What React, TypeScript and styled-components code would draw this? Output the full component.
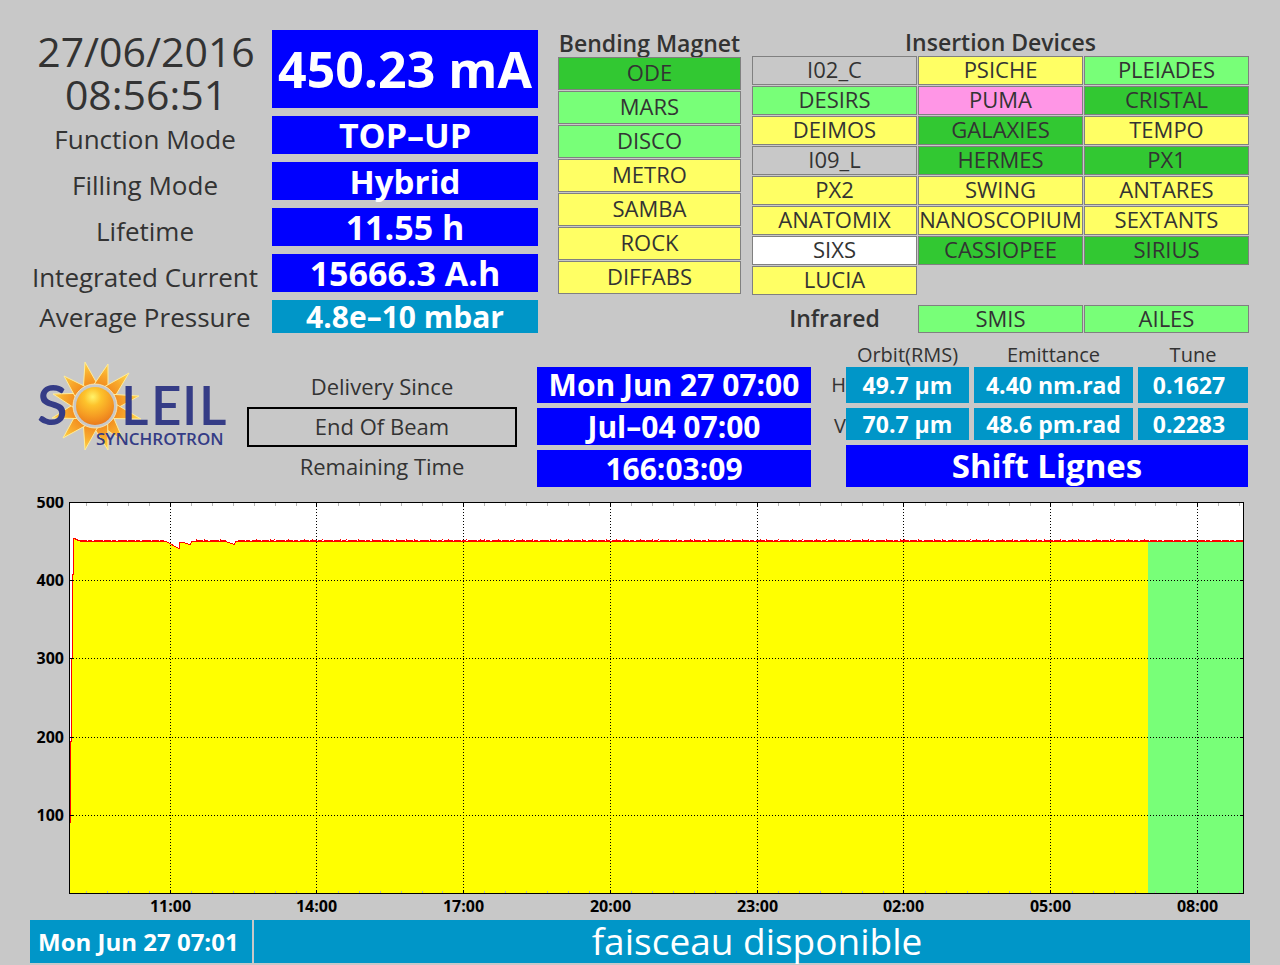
import React from 'react';
import styled, { createGlobalStyle } from 'styled-components';

const GlobalStyle = createGlobalStyle`
  * { box-sizing: border-box; }
  body {
    margin: 0;
    background: #c8c8c8;
    color: #333;
    font-family: "Open Sans", "Noto Sans", sans-serif;
  }
`;

const colors = {
  blue: '#0000ff',
  teal: '#0096c8',
  open: '#32c832',
  ready: '#78ff78',
  closed: '#ffff64',
  fault: '#ff96e6',
  idle: '#ffffff',
  off: '#c8c8c8',
};

type State = 'open' | 'ready' | 'closed' | 'fault' | 'idle' | 'off';
type Beamline = [string, State];

const bendingMagnets: Beamline[] = [
  ['ODE', 'open'],
  ['MARS', 'ready'],
  ['DISCO', 'ready'],
  ['METRO', 'closed'],
  ['SAMBA', 'closed'],
  ['ROCK', 'closed'],
  ['DIFFABS', 'closed'],
];

const insertionDevices: Beamline[] = [
  ['I02_C', 'off'], ['PSICHE', 'closed'], ['PLEIADES', 'ready'],
  ['DESIRS', 'ready'], ['PUMA', 'fault'], ['CRISTAL', 'open'],
  ['DEIMOS', 'closed'], ['GALAXIES', 'open'], ['TEMPO', 'closed'],
  ['I09_L', 'off'], ['HERMES', 'open'], ['PX1', 'open'],
  ['PX2', 'closed'], ['SWING', 'closed'], ['ANTARES', 'closed'],
  ['ANATOMIX', 'closed'], ['NANOSCOPIUM', 'closed'], ['SEXTANTS', 'closed'],
  ['SIXS', 'idle'], ['CASSIOPEE', 'open'], ['SIRIUS', 'open'],
  ['LUCIA', 'closed'],
];

const Page = styled.main`
  padding: 30px 30px 2px;
  white-space: nowrap;
`;

const TopRow = styled.section`
  display: grid;
  grid-template-columns: minmax(0, 508fr) minmax(0, 692fr);
  column-gap: 20px;
`;

const Readouts = styled.dl`
  margin: 0;
  display: grid;
  grid-template-columns: minmax(0, 242fr) minmax(0, 266fr);
  grid-template-rows: 78px repeat(4, 38px) 33px;
  row-gap: 8px;
`;

const Clock = styled.dt`
  display: flex;
  flex-direction: column;
  align-items: center;
  padding-right: 10px;
  font-size: 41px;
  line-height: 43px;
`;

const ReadoutLabel = styled.dt<{ $level?: boolean }>`
  display: flex;
  align-items: center;
  justify-content: center;
  padding: ${p => (p.$level ? 0 : 8)}px 12px 0 0;
  font-size: 26px;
  line-height: 32px;
`;

const Readout = styled.dd<{ $tone: 'blue' | 'teal'; $size: number }>`
  margin: 0;
  display: flex;
  align-items: center;
  justify-content: center;
  background: ${p => colors[p.$tone]};
  color: #fff;
  font-size: ${p => p.$size}px;
  line-height: 1;
  font-weight: 700;
`;

const Beamlines = styled.div`
  display: grid;
  grid-template-columns: minmax(0, 183fr) minmax(0, 497fr);
  column-gap: 11px;
  padding-right: 1px;
  align-items: start;
`;

const GroupTitle = styled.h2<{ $height: number }>`
  margin: 0;
  display: flex;
  align-items: center;
  justify-content: center;
  height: ${p => p.$height}px;
  padding-bottom: 2px;
  font-size: 23px;
  font-weight: 600;
  line-height: 24px;
`;

const CellList = styled.ul<{ $columns: number; $row: number }>`
  margin: 0;
  padding: 0;
  list-style: none;
  display: grid;
  grid-template-columns: repeat(${p => p.$columns}, minmax(0, 1fr));
  grid-auto-rows: ${p => p.$row}px;
  gap: 1px;
`;

const Cell = styled.li<{ $state: State }>`
  display: flex;
  align-items: center;
  justify-content: center;
  padding-bottom: 3px;
  border: 1px solid #808080;
  background: ${p => colors[p.$state]};
  font-size: 22px;
  line-height: 24px;
`;

const Infrared = styled.div`
  display: grid;
  grid-template-columns: minmax(0, 165fr) minmax(0, 331fr);
  column-gap: 1px;
  margin-top: 10px;
`;

const MiddleRow = styled.section`
  display: grid;
  grid-template-columns: minmax(0, 217fr) minmax(0, 564fr) minmax(0, 439fr);
  align-items: end;
  margin-top: 12px;
`;

const LogoArt = styled.svg`
  display: block;
  align-self: start;
  width: 210px;
  height: 98px;
  margin-top: 13px;
`;

const Schedule = styled.div`
  display: grid;
  grid-template-columns: minmax(0, 270fr) minmax(0, 274fr);
  column-gap: 20px;
`;

const ScheduleLabels = styled.div`
  display: grid;
  grid-template-rows: repeat(3, 40px);
`;

const ScheduleLabel = styled.div<{ $boxed?: boolean }>`
  display: flex;
  align-items: center;
  justify-content: center;
  padding-bottom: 2px;
  border: 2px solid ${p => (p.$boxed ? '#000' : 'transparent')};
  font-size: 22px;
  line-height: 28px;
`;

const ScheduleValues = styled.div`
  display: grid;
  grid-template-rows: 36px 37px 37px;
  row-gap: 5px;
`;

const Banner = styled.div<{ $size: number }>`
  display: flex;
  align-items: center;
  justify-content: center;
  background: ${colors.blue};
  color: #fff;
  font-size: ${p => p.$size}px;
  font-weight: 700;
  line-height: 36px;
`;

const Optics = styled.div`
  padding: 0 2px 0 16px;
`;

const OpticsTable = styled.table`
  display: grid;
  grid-template-columns: 14px minmax(0, 123fr) minmax(0, 159fr) minmax(0, 110fr);
  grid-template-rows: 17px 36px 32px;
  gap: 5px;

  thead, tbody, tr { display: contents; }
`;

const ColumnHead = styled.th`
  padding: 0;
  font-size: 20px;
  font-weight: 400;
  line-height: 20px;
  text-align: center;
`;

const RowHead = styled.th`
  padding: 0;
  margin-right: -5px;
  font-size: 20px;
  font-weight: 400;
  line-height: 36px;
  text-align: right;
`;

const OpticsCell = styled.td`
  display: flex;
  align-items: center;
  justify-content: center;
  padding: 0;
  background: ${colors.teal};
  color: #fff;
  font-size: 23px;
  font-weight: 700;
  line-height: 30px;

  &:last-child { padding-right: 8px; }
`;

const ShiftBanner = styled(Banner)`
  height: 42px;
  margin: 5px 0 0 19px;
`;

const ChartArt = styled.svg`
  display: block;
  width: 100%;
  margin-top: 10px;
  font-size: 16px;
  font-weight: 700;
`;

const Footer = styled.footer`
  display: grid;
  grid-template-columns: minmax(0, 222fr) minmax(0, 996fr);
  column-gap: 2px;
  min-height: 43px;
  color: #fff;
`;

const MessageTime = styled.time`
  display: flex;
  align-items: center;
  padding-left: 8px;
  background: ${colors.teal};
  font-size: 24px;
  font-weight: 700;
`;

const Message = styled.div`
  display: flex;
  align-items: center;
  justify-content: center;
  padding: 0 0 2px 10px;
  background: ${colors.teal};
  font-size: 37px;
  line-height: 40px;
`;

const sunX = 65;
const sunY = 48;
const rayTips = [
  [55, 4], [78, 6], [99, 15], [109, 38], [111, 61], [94, 84],
  [78, 92], [55, 92], [33, 80], [22, 60], [23, 36], [34, 18],
];

function ray([x, y]: number[]) {
  const a = Math.atan2(y - sunY, x - sunX);
  const at = (d: number) =>
    `${(sunX + 22 * Math.cos(a + d)).toFixed(1)},${(sunY + 22 * Math.sin(a + d)).toFixed(1)}`;
  return `M${at(-0.33)}L${x},${y}L${at(0.33)}Z`;
}

function Logo() {
  return (
    <LogoArt viewBox="0 0 210 98" role="img" aria-label="SOLEIL Synchrotron">
      <defs>
        <radialGradient id="rays" gradientUnits="userSpaceOnUse" cx={sunX} cy={sunY} r="46">
          <stop offset="0.45" stopColor="#f28c1e" />
          <stop offset="0.7" stopColor="#f8a92c" />
          <stop offset="1" stopColor="#ffd84a" />
        </radialGradient>
        <radialGradient id="disc" cx="0.44" cy="0.26" r="0.75">
          <stop offset="0" stopColor="#fff36a" />
          <stop offset="0.3" stopColor="#fdc32c" />
          <stop offset="0.7" stopColor="#f59a22" />
          <stop offset="1" stopColor="#ea7a1c" />
        </radialGradient>
      </defs>
      {rayTips.map(tip => (
        <path key={tip.join()} d={ray(tip)} fill="url(#rays)" stroke="#ffec9a" strokeWidth="1" />
      ))}
      <circle cx={sunX} cy={sunY} r="22" fill="#c8c8c8" stroke="#f6e2b0" strokeWidth="1" />
      <circle cx={sunX} cy={sunY} r="19" fill="url(#disc)" />
      <g fill="#353c86" fontFamily="Lato, sans-serif" fontWeight="600">
        <text y="67" x="7" fontSize="56">S</text>
        <text y="67" x="91 121 152 169" fontSize="53">LEIL</text>
      </g>
      <text x="66" y="87" fontSize="17" fontWeight="600" fill="#353c86">SYNCHROTRON</text>
    </LogoArt>
  );
}

/* Plot area in the chart's own units. */
const left = 39.5;
const right = 1213.5;
const top = 5.5;
const bottom = 396.5;
const deliveryX = 1118;

const hours: [string, number][] = [
  ['11:00', 140.5], ['14:00', 286.5], ['17:00', 433.5], ['20:00', 580.5],
  ['23:00', 727.5], ['02:00', 873.5], ['05:00', 1020.5], ['08:00', 1167.5],
];
const currents: [string, number][] = [
  ['500', 5.5], ['400', 83.5], ['300', 161.5], ['200', 240.5], ['100', 318.5],
];
const minorTicks = Array.from({ length: 56 }, (_, i) => Math.round(56 + i * 20.97) + 0.5)
  .filter(x => x < right && !hours.some(([, h]) => Math.abs(h - x) < 3));

const rampUp = 'M40.5 326V244H41.5V161H42.5V77H43.5V41H45.5V42H47.5V43H50.5';
const beam = `${rampUp}V44.5H136L149 51.5V45.5H153L160 47.5L162 44.5H196L204 47.5L206 44.5H1213`;
const spikes = Array.from({ length: 150 }, (_, i) => 166 + i * 7 + ((i * i * 13) % 6))
  .filter((x, i) => (i * 7) % 5 < 3 && x < 1120 && (x < 194 || x > 208));

function CurrentChart() {
  return (
    <ChartArt viewBox="0 0 1220 423" role="img" aria-label="Stored current over 24 hours, mA">
      <rect x={left} y={top} width={right - left} height={bottom - top} fill="#fff" />
      <g shapeRendering="crispEdges">
        <path d={`${beam}V396H40Z`} fill="#ffff00" />
        <rect x={deliveryX} y="44" width={right - deliveryX} height="352" fill="#78ff78" />
        <g stroke="#000" strokeDasharray="1 2">
          {hours.map(([t, x]) => <line key={t} x1={x} x2={x} y1={top} y2={bottom} />)}
          {currents.slice(1).map(([t, y]) => <line key={t} x1={left} x2={right} y1={y} y2={y} />)}
        </g>
        <path d={beam} fill="none" stroke="#ff0000" />
        <path d="M50 43.5H136M166 43.5H196M208 43.5H1213" stroke="#ff0000" strokeDasharray="7 1 4 2 9 1" />
        <path d={spikes.map(x => `M${x} 42.5h1`).join('')} stroke="#ff0000" />
        <g stroke="#b4b4b4">
          {minorTicks.map(x => (
            <path key={x} d={`M${x} ${top}v3M${x} ${bottom}v-3`} />
          ))}
        </g>
        <g stroke="#000">
          {hours.map(([t, x]) => <path key={t} d={`M${x} ${top}v4M${x} ${bottom}v-4`} />)}
          {currents.map(([t, y]) => <path key={t} d={`M${left} ${y}h4M${right} ${y}h-4`} />)}
        </g>
        <rect x={left} y={top} width={right - left} height={bottom - top} fill="none" stroke="#000" />
      </g>
      {hours.map(([t, x]) => <text key={t} x={x} y="415" textAnchor="middle">{t}</text>)}
      {currents.map(([t, y]) => <text key={t} x="34" y={y + 5} textAnchor="end">{t}</text>)}
    </ChartArt>
  );
}

function CellGroup({ items, columns, row }: { items: Beamline[]; columns: number; row: number }) {
  return (
    <CellList $columns={columns} $row={row}>
      {items.map(([name, state]) => <Cell key={name} $state={state}>{name}</Cell>)}
    </CellList>
  );
}

export default function App() {
  return (
    <>
      <GlobalStyle />
      <Page>
        <TopRow>
          <Readouts>
            <Clock><span>27/06/2016</span><span>08:56:51</span></Clock>
            <Readout $tone="blue" $size={50}>450.23 mA</Readout>
            <ReadoutLabel>Function Mode</ReadoutLabel>
            <Readout $tone="blue" $size={34}>TOP–UP</Readout>
            <ReadoutLabel>Filling Mode</ReadoutLabel>
            <Readout $tone="blue" $size={33}>Hybrid</Readout>
            <ReadoutLabel>Lifetime</ReadoutLabel>
            <Readout $tone="blue" $size={34}>11.55 h</Readout>
            <ReadoutLabel>Integrated Current</ReadoutLabel>
            <Readout $tone="blue" $size={34}>15666.3 A.h</Readout>
            <ReadoutLabel $level>Average Pressure</ReadoutLabel>
            <Readout $tone="teal" $size={30}>4.8e–10 mbar</Readout>
          </Readouts>
          <Beamlines>
            <div>
              <GroupTitle $height={27}>Bending Magnet</GroupTitle>
              <CellGroup items={bendingMagnets} columns={1} row={33} />
            </div>
            <div>
              <GroupTitle $height={26}>Insertion Devices</GroupTitle>
              <CellGroup items={insertionDevices} columns={3} row={29} />
              <Infrared>
                <GroupTitle $height={28}>Infrared</GroupTitle>
                <CellGroup items={[['SMIS', 'ready'], ['AILES', 'ready']]} columns={2} row={28} />
              </Infrared>
            </div>
          </Beamlines>
        </TopRow>

        <MiddleRow>
          <Logo />
          <Schedule>
            <ScheduleLabels>
              <ScheduleLabel>Delivery Since</ScheduleLabel>
              <ScheduleLabel $boxed>End Of Beam</ScheduleLabel>
              <ScheduleLabel>Remaining Time</ScheduleLabel>
            </ScheduleLabels>
            <ScheduleValues>
              <Banner $size={30}>Mon Jun 27 07:00</Banner>
              <Banner $size={30}>Jul–04 07:00</Banner>
              <Banner $size={30}>166:03:09</Banner>
            </ScheduleValues>
          </Schedule>
          <Optics>
            <OpticsTable>
              <thead>
                <tr>
                  <td />
                  <ColumnHead scope="col">Orbit(RMS)</ColumnHead>
                  <ColumnHead scope="col">Emittance</ColumnHead>
                  <ColumnHead scope="col">Tune</ColumnHead>
                </tr>
              </thead>
              <tbody>
                <tr>
                  <RowHead scope="row">H</RowHead>
                  <OpticsCell>49.7 µm</OpticsCell>
                  <OpticsCell>4.40 nm.rad</OpticsCell>
                  <OpticsCell>0.1627</OpticsCell>
                </tr>
                <tr>
                  <RowHead scope="row">V</RowHead>
                  <OpticsCell>70.7 µm</OpticsCell>
                  <OpticsCell>48.6 pm.rad</OpticsCell>
                  <OpticsCell>0.2283</OpticsCell>
                </tr>
              </tbody>
            </OpticsTable>
            <ShiftBanner $size={33}>Shift Lignes</ShiftBanner>
          </Optics>
        </MiddleRow>

        <CurrentChart />

        <Footer>
          <MessageTime>Mon Jun 27 07:01</MessageTime>
          <Message>faisceau disponible</Message>
        </Footer>
      </Page>
    </>
  );
}
